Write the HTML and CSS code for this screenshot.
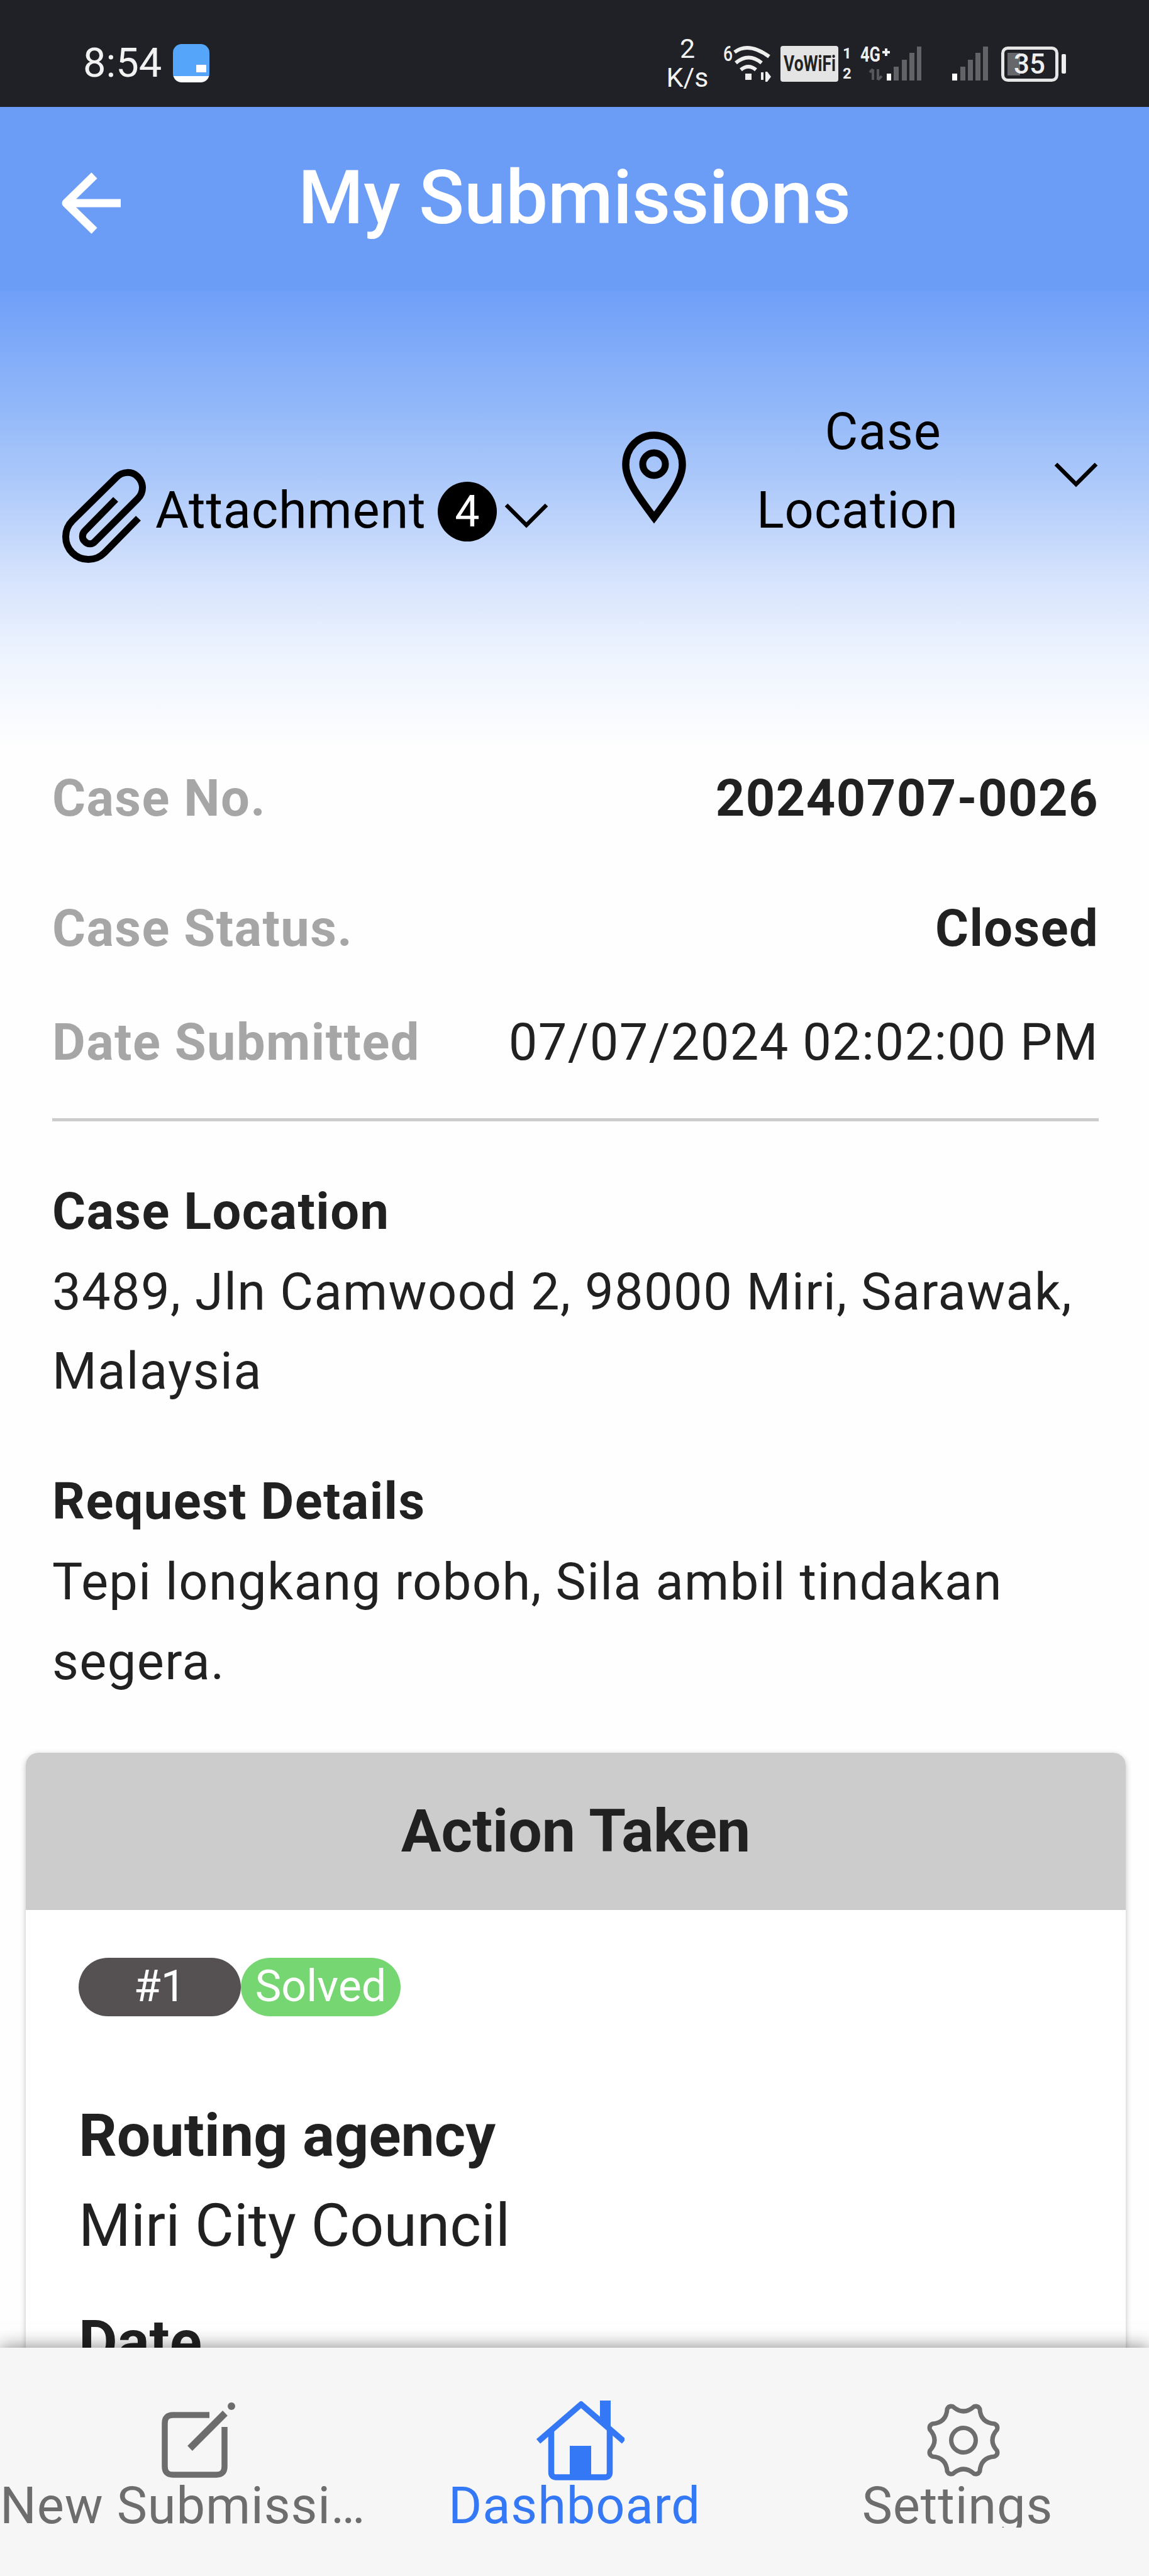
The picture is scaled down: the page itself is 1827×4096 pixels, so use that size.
FILE: index.html
```html
<!DOCTYPE html>
<html lang="en">
<head>
    <meta charset="UTF-8" />
    <meta name="viewport" content="width=device-width, initial-scale=1" />
    <title>My Submissions</title>
    <link rel="stylesheet" href="styles.css">
</head>
<body>
    <div class="status-bar">
        <span class="clock">8:54</span>
        <span class="app-icon"></span>
        <div class="status-icons">
            <div class="net-speed"><span>2</span><span>K/s</span></div>
            <!-- wifi -->
            <svg width="90" height="70" viewBox="1146 62 90 70">
                <text x="1150" y="94" class="tiny" textLength="15" lengthAdjust="spacingAndGlyphs">6</text>
                <g fill="none" stroke="#eee" stroke-width="6">
                    <path d="M1168 80q22-17 55 7" />
                    <path d="M1170 97q20-17 41 0" />
                    <path d="M1178 108q12-10 24 0" />
                </g>
                <path d="M1185 114h10v10h-10zM1210 124v-12h4v12zM1217 111h3l6 8-6 8h-3z" fill="#eee" />
            </svg>
            <!-- VoWiFi -->
            <svg width="124" height="70" viewBox="1236 62 124 70">
                <rect x="1241" y="70" width="92" height="57" rx="4" fill="#e4e4e4" />
                <text x="1246" y="110" class="vowifi" textLength="83" lengthAdjust="spacingAndGlyphs">VoWiFi</text>
                <text x="1340" y="90" class="tiny sim">1</text>
                <text x="1340" y="122" class="tiny sim">2</text>
            </svg>
            <!-- sim 1 -->
            <svg width="112" height="70" viewBox="1360 62 112 70">
                <text x="1368" y="95" class="tiny net" textLength="32" lengthAdjust="spacingAndGlyphs">4G</text>
                <path d="M1403 80h12M1409 74v12" stroke="#eee" stroke-width="4" />
                <path d="M1388 107v17M1383 112l5-5M1396 107v17M1396 124l6-6" fill="none" stroke="#55575b" stroke-width="4" />
                <path d="M1410 114h7v11h-7z" fill="#fff" />
                <path d="M1421 103h8v22h-8zM1434 92h8v33h-8zM1446 81h8v44h-8zM1458 71h7v54h-7z" fill="#616366" />
            </svg>
            <!-- sim 2 -->
            <svg width="110" height="70" viewBox="1472 62 110 70">
                <path d="M1514 114h8v11h-8z" fill="#fff" />
                <path d="M1527 103h8v22h-8zM1539 92h8v33h-8zM1551 81h8v44h-8zM1563 71h8v54h-8z" fill="#616366" />
            </svg>
            <!-- battery -->
            <svg width="120" height="70" viewBox="1582 62 120 70">
                <rect x="1594.500" y="73.500" width="86" height="51" rx="8" fill="none" stroke="#e6e6e6" stroke-width="5" />
                <path d="M1602 81h20v36h-20z" fill="#65676a" />
                <text x="1612" y="114" class="battery">35</text>
                <rect x="1688" y="83" width="7" height="31" rx="2" fill="#eee" />
            </svg>
        </div>
    </div>

    <header class="header">
        <svg class="back" width="110" height="110" viewBox="90 268 110 110">
            <path d="M192 323H106M150 279l-45 44 45 44" fill="none" stroke="#fff" stroke-width="13" stroke-linejoin="round" />
        </svg>
        <h1>My Submissions</h1>
    </header>

    <main class="content">
        <div class="options">
            <div class="option attachment">
                <svg width="146" height="160" viewBox="94 740 146 160">
                    <path d="M220 824l-54 55c-14 14-37 14-51 0-14-14-14-37 0-51l70-69c10-10 25-10 34-1 10 10 10 25 0 35l-68 68c-4 5-12 5-16 0-5-4-5-12 0-17l49-50" fill="none" stroke="#000" stroke-width="11" />
                </svg>
                <span class="attachment-label">Attachment</span>
                <span class="count">4</span>
                <svg class="chevron" width="78" height="46" viewBox="0 0 78 46">
                    <path d="M7 6l32 32L71 6" fill="none" stroke="#000" stroke-width="6.500" />
                </svg>
            </div>
            <div class="option location">
                <svg class="pin" width="110" height="150" viewBox="985 683 110 150">
                    <path d="M1040 692c-25 0-45 20-45 47 0 22 15 44 45 84 30-40 45-62 45-84 0-27-20-47-45-47z" fill="none" stroke="#000" stroke-width="11.500" />
                    <circle cx="1040" cy="738" r="18" fill="none" stroke="#000" stroke-width="11" />
                </svg>
                <span class="location-label">Case Location</span>
                <svg class="chevron" width="78" height="46" viewBox="0 0 78 46">
                    <path d="M7 6l32 32L71 6" fill="none" stroke="#000" stroke-width="6.500" />
                </svg>
            </div>
        </div>

        <section class="details">
            <div class="row row-no"><span class="label">Case No.</span><b>20240707-0026</b></div>
            <div class="row row-status"><span class="label">Case Status.</span><b>Closed</b></div>
            <div class="row"><span class="label">Date Submitted</span><span>07/07/2024 02:02:00 PM</span></div>
            <hr>
            <div class="block">
                <h3>Case Location</h3>
                <p>3489, Jln Camwood 2, 98000 Miri, Sarawak, Malaysia</p>
            </div>
            <div class="block">
                <h3>Request Details</h3>
                <p>Tepi longkang roboh, Sila ambil tindakan segera.</p>
            </div>
        </section>

        <section class="card">
            <h2>Action Taken</h2>
            <div class="card-body">
                <div class="badges">
                    <span class="badge badge-no">#1</span>
                    <span class="badge badge-solved">Solved</span>
                </div>
                <h3>Routing agency</h3>
                <p>Miri City Council</p>
                <h3 class="date">Date</h3>
            </div>
        </section>
    </main>

    <nav class="tabbar">
        <a class="tab">
            <svg width="130" height="130" viewBox="248 3813 130 130">
                <g fill="none" stroke="#6d6d6d" stroke-width="9.500">
                    <path d="M332 3839h-58q-13 0-13 13v69q0 13 13 13h69q13 0 13-13v-63" />
                    <path d="M301 3892l56-56" stroke-width="11" />
                </g>
                <circle cx="367" cy="3825" r="6" fill="#6d6d6d" />
            </svg>
            <span>New Submissions</span>
        </a>
        <a class="tab active">
            <svg width="140" height="130" viewBox="854 3813 140 130">
                <g fill="none" stroke="#3478f6" stroke-width="9.500">
                    <path d="M857 3881l68-59 68 59" stroke-linejoin="round" />
                    <path d="M877.500 3862v68q0 8 8 8h77q8 0 8-8v-68" />
                </g>
                <path d="M955 3816h17v48l-17-15zM907 3888h34v50h-34z" fill="#3478f6" />
            </svg>
            <span>Dashboard</span>
        </a>
        <a class="tab">
            <svg width="130" height="130" viewBox="-65 -66 130 130">
                <g fill="none" stroke="#6d6d6d" stroke-width="7">
                    <path d="M-16.800-53.400Q0-38.600 16.800-53.400Q23-55.400 25.900-49.700Q27.300-27.300 49.700-25.900Q55.400-23 53.400-16.800Q38.600 0 53.400 16.800Q55.400 23 49.700 25.900Q27.300 27.300 25.900 49.700Q23 55.400 16.800 53.400Q0 38.600-16.800 53.400Q-23 55.400-25.900 49.700Q-27.300 27.300-49.700 25.900Q-55.400 23-53.400 16.800Q-38.600 0-53.400-16.800Q-55.400-23-49.700-25.900Q-27.300-27.300-25.900-49.700Q-23-55.400-16.800-53.400Z" />
                    <circle r="19.500" />
                </g>
            </svg>
            <span>Settings</span>
        </a>
    </nav>
</body>
</html>
```

FILE: styles.css
```css
* {
    box-sizing: border-box;
}
body {
    margin: 0;
    width: 1827px;
    height: 4096px;
    overflow: hidden;
    display: flex;
    flex-direction: column;
    font-family: Roboto, sans-serif;
    font-size: 81.2px;
    line-height: 126.2px;
    color: #212121;
    background: #fefefe;
}
h1, h2, h3, p {
    margin: 0;
}
svg {
    display: block;
    flex: none;
}

/* phone status bar */
.status-bar {
    height: 170px;
    flex: none;
    display: flex;
    align-items: center;
    padding: 30px 125px 0 132px;
    background: #1f2126;
    color: #f2f2f2;
}
.clock {
    width: 143px;
    font-size: 65px;
    line-height: 70px;
}
.app-icon {
    width: 58px;
    height: 61px;
    border-radius: 14px;
    background:
        linear-gradient(#fff, #fff) 37px 33px / 16px 12px no-repeat,
        linear-gradient(#55a5fb 84%, #fff 84%);
}
.status-icons {
    margin-left: auto;
    display: flex;
    align-items: center;
}
.net-speed {
    width: 84px;
    display: flex;
    flex-direction: column;
    align-items: center;
    padding-right: 22px;
    font-size: 43px;
    line-height: 46px;
}
.tiny {
    font-size: 33px;
    font-weight: 500;
    fill: #eee;
}
.sim {
    font-size: 24px;
    font-weight: 700;
}
.net {
    font-weight: 700;
}
.vowifi {
    font-size: 35px;
    font-weight: 700;
    fill: #222;
}
.battery {
    font-size: 44px;
    font-weight: 500;
    fill: #eee;
}

.header {
    height: 292px;
    flex: none;
    display: flex;
    align-items: center;
    padding: 14px 90px 0;
    background: #6b9df7;
    color: #fff;
}
.header h1 {
    flex: 1;
    margin-right: 110px;
    padding-bottom: 16px;
    text-align: center;
    font-size: 119px;
    font-weight: 500;
}

.content {
    flex: 1;
    overflow: hidden;
}
.options {
    height: 745px;
    display: grid;
    grid-template-columns: 891px 842px;
    align-items: start;
    padding: 163px 0 0 94px;
    background: linear-gradient(#6f9ff8 0, #8eb5f9 166px, #abc8fa 299px, #d9e5fd 470px, #eef4fe 583px, #fefefe 728px);
    color: #000;
    line-height: 124.7px;
}
.option {
    display: flex;
    align-items: center;
}
.attachment {
    padding-top: 115px;
}
.attachment-label {
    width: 456px;
    padding: 0 0 16px 7px;
}
.count {
    width: 94px;
    height: 95px;
    margin-bottom: 14px;
    border-radius: 50%;
    background: #000;
    color: #fff;
    font-size: 70px;
    line-height: 95px;
    text-align: center;
}
.attachment .chevron {
    margin-left: 8px;
}
.pin {
    margin-top: 16px;
}
.location-label {
    width: 440px;
    margin: 0 89px 0 48px;
    text-align: center;
    text-indent: 82px;
    padding: 0 60px;
}
.location .chevron {
    margin-top: 10px;
}
.location-label, .attachment-label {
    letter-spacing: 0.8px;
}

.details {
    padding: 0 80px 0 83px;
    letter-spacing: 1.4px;
}
.row {
    display: flex;
    justify-content: space-between;
}
.row-no {
    margin-bottom: 81px;
}
.row-status {
    margin-bottom: 55px;
}
.label {
    font-weight: 700;
    color: #a6a6a6;
}
hr {
    height: 5px;
    margin: 56px 0 81px;
    border: none;
    background: #ccc;
}
.block {
    margin-bottom: 81px;
}
.block h3 {
    font-size: inherit;
    padding-bottom: 2px;
}

.card {
    margin: 0 37px 0 41px;
    height: 1200px;
    border-radius: 20px;
    background: #fff;
    box-shadow: 0 3px 10px rgba(0, 0, 0, 0.25);
    overflow: hidden;
}
.card h2 {
    height: 250px;
    padding-bottom: 2px;
    background: #ccc;
    text-align: center;
    font-size: 95px;
    font-weight: 700;
    line-height: 250px;
}
.card-body {
    padding: 76px 84px;
    font-size: 95px;
    line-height: 143px;
}
.card-body h3 {
    font-size: inherit;
}
.badges {
    display: flex;
    margin-bottom: 118px;
    color: #fff;
    font-size: 70px;
    line-height: 91px;
    text-align: center;
}
.badge {
    height: 93px;
    border-radius: 47px;
}
.badge-no {
    width: 258px;
    background: #555153;
}
.badge-solved {
    width: 254px;
    background: #75d672;
}
.date {
    padding-top: 42px;
}

/* bottom tabs */
.tabbar {
    position: relative;
    height: 363px;
    flex: none;
    display: grid;
    grid-template-columns: repeat(3, 1fr);
    background: #f6f6f6;
    box-shadow: 0 0 28px rgba(0, 0, 0, 0.5);
}
.tab {
    display: flex;
    flex-direction: column;
    align-items: center;
    min-width: 0;
    padding-top: 81px;
    color: #6d6d6d;
    letter-spacing: 0.9px;
}
.tab svg {
    margin-left: 18px;
}
.tab span {
    max-width: 100%;
    height: 75px;
    line-height: 81px;
    overflow: hidden;
    text-overflow: ellipsis;
    white-space: nowrap;
}
.active {
    color: #3478f6;
}
```
